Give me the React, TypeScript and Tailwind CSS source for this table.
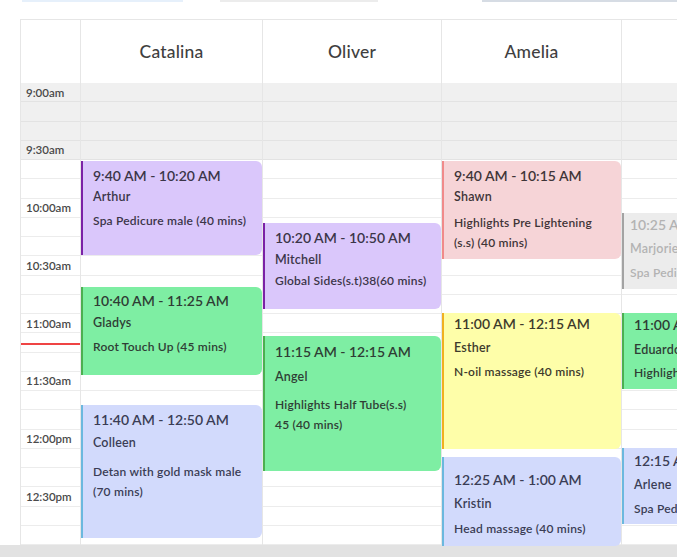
import React from "react";

type Tone = "purple" | "green" | "blue" | "pink" | "yellow" | "gray";

const tones: Record<Tone, string> = {
  purple: "bg-[#dac7fb] border-[#7b22a6] text-[#3b3548]",
  green: "bg-[#7eeea3] border-[#4caf50] text-[#2f3d35]",
  blue: "bg-[#d2dafc] border-[#6bb8de] text-[#3a3d55]",
  pink: "bg-[#f6d4d7] border-[#f08a8a] text-[#3f3538]",
  yellow: "bg-[#fefea9] border-[#f0b020] text-[#3d3a2c]",
  gray: "bg-[#ececec] border-[#a3a3a3] text-[#b3b3b3]",
};

type Appt = {
  top: number;
  h: number;
  time: string;
  name: string;
  desc: string[];
  tone: Tone;
  pt: number;
  g1: number;
  g2: number;
  pl?: number;
};

const columns: { name: string; width: string; events: Appt[] }[] = [
  {
    name: "Catalina",
    width: "w-[182px]",
    events: [
      { top: 78, h: 94, time: "9:40 AM - 10:20 AM", name: "Arthur", desc: ["Spa Pedicure male (40 mins)"], tone: "purple", pt: 5, g1: 1, g2: 4 },
      { top: 204, h: 88, time: "10:40 AM - 11:25 AM", name: "Gladys", desc: ["Root Touch Up (45 mins)"], tone: "green", pt: 4, g1: 2, g2: 4 },
      { top: 322, h: 133, time: "11:40 AM - 12:50 AM", name: "Colleen", desc: ["Detan with gold mask male", "(70 mins)"], tone: "blue", pt: 5, g1: 3, g2: 9 },
    ],
  },
  {
    name: "Oliver",
    width: "w-[179px]",
    events: [
      { top: 140, h: 86, time: "10:20 AM - 10:50 AM", name: "Mitchell", desc: ["Global Sides(s.t)38(60 mins)"], tone: "purple", pt: 5, g1: 2, g2: 1 },
      { top: 253, h: 135, time: "11:15 AM - 12:15 AM", name: "Angel", desc: ["Highlights Half Tube(s.s)", "45 (40 mins)"], tone: "green", pt: 6, g1: 5, g2: 8 },
    ],
  },
  {
    name: "Amelia",
    width: "w-[180px]",
    events: [
      { top: 78, h: 98, time: "9:40 AM - 10:15 AM", name: "Shawn", desc: ["Highlights Pre Lightening", "(s.s) (40 mins)"], tone: "pink", pt: 5, g1: 1, g2: 6 },
      { top: 230, h: 136, time: "11:00 AM - 12:15 AM", name: "Esther", desc: ["N-oil massage (40 mins)"], tone: "yellow", pt: 1, g1: 4, g2: 4 },
      { top: 374, h: 89, time: "12:25 AM - 1:00 AM", name: "Kristin", desc: ["Head massage (40 mins)"], tone: "blue", pt: 13, g1: 4, g2: 5 },
    ],
  },
  {
    name: "Emma",
    width: "w-[180px]",
    events: [
      { top: 130, h: 76, time: "10:25 AM - 10:50 AM", name: "Marjorie", desc: ["Spa Pedicure (25 mins)"], tone: "gray", pt: 2, g1: 4, g2: 4, pl: 6 },
      { top: 230, h: 76, time: "11:00 AM - 11:40 AM", name: "Eduardo", desc: ["Highlights (40 mins)"], tone: "green", pt: 2, g1: 5, g2: 3 },
      { top: 365, h: 76, time: "12:15 AM - 12:55 AM", name: "Arlene", desc: ["Spa Pedicure (40 mins)"], tone: "blue", pt: 3, g1: 4, g2: 4 },
    ],
  },
];

const labels: Record<number, string> = {
  0: "9:00am",
  3: "9:30am",
  6: "10:00am",
  9: "10:30am",
  12: "11:00am",
  15: "11:30am",
  18: "12:00pm",
  21: "12:30pm",
};

const rows = Array.from({ length: 24 }, (_, i) => i);

function Rows({ withLabels }: { withLabels?: boolean }) {
  return (
    <>
      {rows.map((i) => (
        <div
          key={i}
          className={`h-[19.25px] flex items-center border-b ${
            i < 4 ? "bg-[#f0f0f0] border-[#e3e3e3]" : "bg-white border-[#ececec]"
          }`}
        >
          {withLabels && labels[i] && (
            <span className="pl-[5px] text-[11.5px] font-semibold text-[#4a4a4a]">{labels[i]}</span>
          )}
        </div>
      ))}
    </>
  );
}

function Event({ ev }: { ev: Appt }) {
  return (
    <div
      className={`absolute left-0 right-0 border-l-2 rounded-r-md ${tones[ev.tone]}`}
      style={{ top: ev.top, height: ev.h, paddingTop: ev.pt, paddingLeft: ev.pl ?? 10 }}
    >
      <div className="text-[14px] leading-[20px] font-semibold whitespace-nowrap">{ev.time}</div>
      <div className="text-[12.5px] leading-[20px] font-semibold tracking-[0.2px] whitespace-nowrap" style={{ marginTop: ev.g1 }}>
        {ev.name}
      </div>
      <div style={{ marginTop: ev.g2 }}>
        {ev.desc.map((d) => (
          <div key={d} className="text-[12px] leading-[20px] font-semibold tracking-[0.2px] whitespace-nowrap">
            {d}
          </div>
        ))}
      </div>
    </div>
  );
}

export default function App() {
  return (
    <div className="w-[677px] h-[557px] overflow-hidden bg-white flex flex-col font-['Lato','Liberation_Sans',sans-serif]">
      <div className="h-[2px] flex">
        <div className="ml-[22px] w-[161px] bg-[#e6f0fb]" />
        <div className="ml-[37px] w-[158px] bg-[#ececec]" />
        <div className="ml-[104px] flex-1 bg-[#d6dce4]" />
      </div>

      <div className="mt-[17px] ml-[20px] flex-1 flex flex-col border-l border-t border-[#e6e6e6] w-[782px]">
        <div className="h-[63px] flex shrink-0">
          <div className="w-[60px] border-r border-[#e6e6e6]" />
          {columns.map((c) => (
            <div
              key={c.name}
              className={`${c.width} border-r border-[#e6e6e6] flex items-center justify-center pt-[2px] text-[17.5px] tracking-[0.2px] font-medium text-[#3f3f3f]`}
            >
              {c.name}
            </div>
          ))}
        </div>

        <div className="flex h-[462px] shrink-0">
          <div className="w-[60px] border-r border-[#e6e6e6] relative">
            <Rows withLabels />
            <div className="absolute left-0 right-0 top-[260px] h-[1.5px] bg-[#ef4444]" />
          </div>
          {columns.map((c) => (
            <div key={c.name} className={`${c.width} border-r border-[#e6e6e6] relative`}>
              <Rows />
              {c.events.map((ev) => (
                <Event key={ev.name} ev={ev} />
              ))}
            </div>
          ))}
        </div>
      </div>

      <div className="h-[12px] bg-[#e2e2e2] shrink-0" />
    </div>
  );
}
